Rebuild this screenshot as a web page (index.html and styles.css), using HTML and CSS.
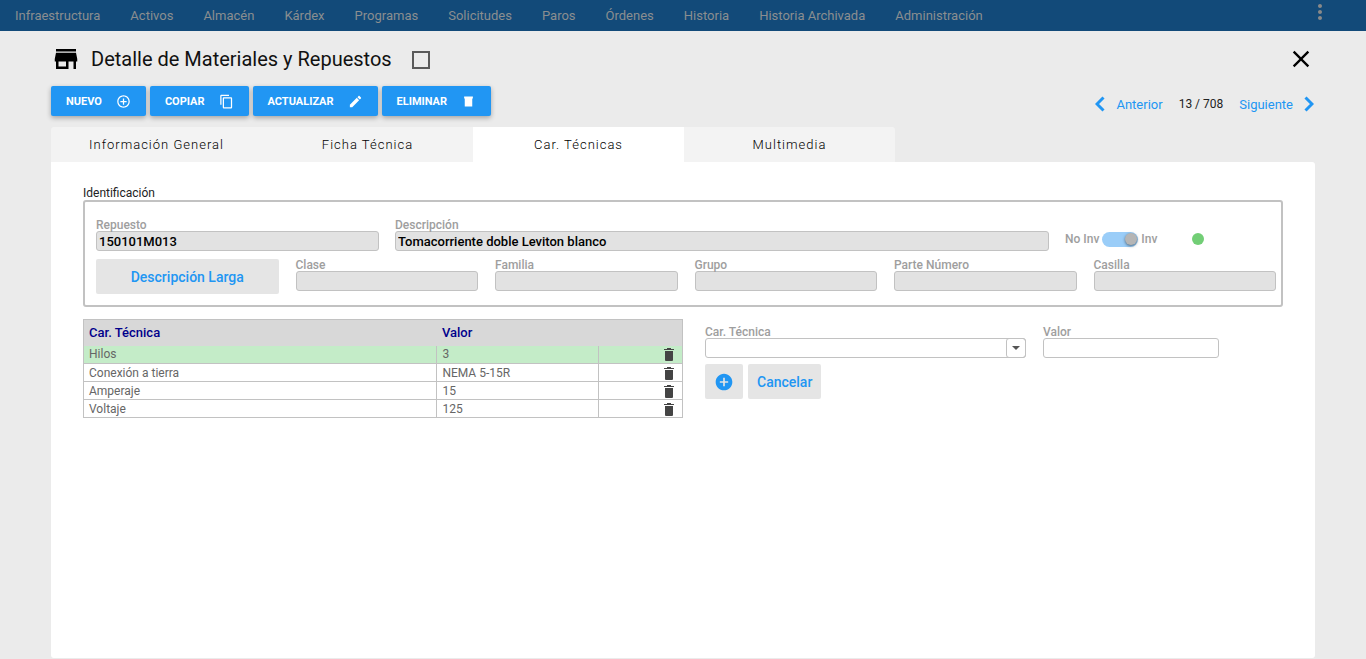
FILE: index.html
```html
<!DOCTYPE html>
<html lang="es">
<head>
  <meta charset="UTF-8">
  <meta name="viewport" content="width=device-width, initial-scale=1.0">
  <title>Detalle de Materiales y Repuestos</title>
  <link rel="stylesheet" href="styles.css">
</head>
<body>
  <nav class="navbar">
    <a href="#">Infraestructura</a>
    <a href="#">Activos</a>
    <a href="#">Almacén</a>
    <a href="#">Kárdex</a>
    <a href="#">Programas</a>
    <a href="#">Solicitudes</a>
    <a href="#">Paros</a>
    <a href="#">Órdenes</a>
    <a href="#">Historia</a>
    <a href="#">Historia Archivada</a>
    <a href="#">Administración</a>
    <button class="menu-btn" type="button" aria-label="Menú">
      <svg viewBox="0 0 24 24"><path d="M12 8c1.1 0 2-.9 2-2s-.9-2-2-2-2 .9-2 2 .9 2 2 2zm0 2c-1.1 0-2 .9-2 2s.9 2 2 2 2-.9 2-2-.9-2-2-2zm0 6c-1.1 0-2 .9-2 2s.9 2 2 2 2-.9 2-2-.9-2-2-2z"/></svg>
    </button>
  </nav>

  <main class="page">
    <header class="title-row">
      <svg class="title-icon" viewBox="0 0 24 24"><path d="M20 4H4v2h16V4zm1 10v-2l-1-5H4l-1 5v2h1v6h10v-6h4v6h2v-6h1zm-9 4H6v-4h6v4z"/></svg>
      <h1>Detalle de Materiales y Repuestos</h1>
      <input class="check" type="checkbox" aria-label="Seleccionar">
      <button class="close-btn" type="button" aria-label="Cerrar">
        <svg viewBox="0 0 24 24"><path d="M19 6.4L17.6 5 12 10.6 6.4 5 5 6.4 10.6 12 5 17.6 6.4 19 12 13.4 17.6 19 19 17.6 13.4 12z"/></svg>
      </button>
    </header>

    <div class="toolbar">
      <div class="actions">
        <button class="btn" type="button">Nuevo
          <svg viewBox="0 0 24 24"><path d="M13 7h-2v4H7v2h4v4h2v-4h4v-2h-4V7zm-1-5C6.48 2 2 6.48 2 12s4.48 10 10 10 10-4.48 10-10S17.52 2 12 2zm0 18c-4.41 0-8-3.59-8-8s3.59-8 8-8 8 3.59 8 8-3.59 8-8 8z"/></svg>
        </button>
        <button class="btn" type="button">Copiar
          <svg viewBox="0 0 24 24"><path d="M16 1H4c-1.1 0-2 .9-2 2v14h2V3h12V1zm3 4H8c-1.1 0-2 .9-2 2v14c0 1.1.9 2 2 2h11c1.1 0 2-.9 2-2V7c0-1.1-.9-2-2-2zm0 16H8V7h11v14z"/></svg>
        </button>
        <button class="btn" type="button">Actualizar
          <svg viewBox="0 0 24 24"><path d="M3 17.25V21h3.75L17.81 9.94l-3.75-3.75L3 17.25zM20.71 7.04c.39-.39.39-1.02 0-1.41l-2.34-2.34c-.39-.39-1.02-.39-1.41 0l-1.83 1.83 3.75 3.75 1.83-1.83z"/></svg>
        </button>
        <button class="btn" type="button">Eliminar
          <svg viewBox="0 0 24 24"><path d="M5 4h14v3h-1v13H6V7H5z"/></svg>
        </button>
      </div>
      <div class="pager">
        <a href="#">
          <svg viewBox="0 0 10 16"><path d="M8.5 1.5L2 8l6.500 6.500"/></svg>
          Anterior
        </a>
        <span class="pager-count">13 / 708</span>
        <a href="#">
          Siguiente
          <svg viewBox="0 0 10 16"><path d="M1.500 1.500L8 8l-6.500 6.500"/></svg>
        </a>
      </div>
    </div>

    <div class="tabs" role="tablist">
      <button class="tab" type="button" role="tab">Información General</button>
      <button class="tab" type="button" role="tab">Ficha Técnica</button>
      <button class="tab active" type="button" role="tab" aria-selected="true">Car. Técnicas</button>
      <button class="tab" type="button" role="tab">Multimedia</button>
    </div>

    <section class="panel">
      <fieldset class="group">
        <legend>Identificación</legend>
        <div class="group-box">
          <div class="row-main">
            <div class="field">
              <label for="repuesto">Repuesto</label>
              <input id="repuesto" type="text" value="150101M013" readonly>
            </div>
            <div class="field">
              <label for="descripcion">Descripción</label>
              <input id="descripcion" type="text" value="Tomacorriente doble Leviton blanco" readonly>
            </div>
            <div class="status">
              <label class="switch">
                No Inv
                <input type="checkbox" checked disabled>
                Inv
              </label>
              <span class="dot"></span>
            </div>
          </div>
          <div class="row-detail">
            <button class="btn-flat" type="button">Descripción Larga</button>
            <div class="field">
              <label for="clase">Clase</label>
              <input id="clase" type="text" readonly>
            </div>
            <div class="field">
              <label for="familia">Familia</label>
              <input id="familia" type="text" readonly>
            </div>
            <div class="field">
              <label for="grupo">Grupo</label>
              <input id="grupo" type="text" readonly>
            </div>
            <div class="field">
              <label for="parte">Parte Número</label>
              <input id="parte" type="text" readonly>
            </div>
            <div class="field">
              <label for="casilla">Casilla</label>
              <input id="casilla" type="text" readonly>
            </div>
          </div>
        </div>
      </fieldset>

      <div class="columns">
        <table class="specs">
          <thead>
            <tr>
              <th class="col-name">Car. Técnica</th>
              <th class="col-value">Valor</th>
              <th class="col-action"></th>
            </tr>
          </thead>
          <tbody>
            <tr class="selected">
              <td>Hilos</td>
              <td>3</td>
              <td><button class="trash" type="button" aria-label="Eliminar Hilos"><svg viewBox="0 0 10 13"><path d="M0 1h3V0h4v1h3v1H0zM1 3h8v9q0 1-1 1H2q-1 0-1-1z"/></svg></button></td>
            </tr>
            <tr>
              <td>Conexión a tierra</td>
              <td>NEMA 5-15R</td>
              <td><button class="trash" type="button" aria-label="Eliminar Conexión a tierra"><svg viewBox="0 0 10 13"><path d="M0 1h3V0h4v1h3v1H0zM1 3h8v9q0 1-1 1H2q-1 0-1-1z"/></svg></button></td>
            </tr>
            <tr>
              <td>Amperaje</td>
              <td>15</td>
              <td><button class="trash" type="button" aria-label="Eliminar Amperaje"><svg viewBox="0 0 10 13"><path d="M0 1h3V0h4v1h3v1H0zM1 3h8v9q0 1-1 1H2q-1 0-1-1z"/></svg></button></td>
            </tr>
            <tr>
              <td>Voltaje</td>
              <td>125</td>
              <td><button class="trash" type="button" aria-label="Eliminar Voltaje"><svg viewBox="0 0 10 13"><path d="M0 1h3V0h4v1h3v1H0zM1 3h8v9q0 1-1 1H2q-1 0-1-1z"/></svg></button></td>
            </tr>
          </tbody>
        </table>

        <form class="spec-form">
          <div class="spec-fields">
            <div class="field">
              <label for="car">Car. Técnica</label>
              <div class="combo">
                <select id="car"><option></option></select>
                <span class="combo-arrow"></span>
              </div>
            </div>
            <div class="field">
              <label for="valor">Valor</label>
              <input id="valor" type="text">
            </div>
          </div>
          <div class="spec-buttons">
            <button class="btn-flat btn-add" type="button" aria-label="Agregar">
              <svg viewBox="0 0 24 24"><path d="M12 2C6.48 2 2 6.48 2 12s4.480 10 10 10 10-4.480 10-10S17.520 2 12 2zm5 11h-4v4h-2v-4H7v-2h4V7h2v4h4v2z"/></svg>
            </button>
            <button class="btn-flat btn-cancel" type="button">Cancelar</button>
          </div>
        </form>
      </div>
    </section>
  </main>
</body>
</html>
```
FILE: styles.css
```css
/* General Styles */
* {
  box-sizing: border-box;
}

body {
  margin: 0;
  min-height: 100vh;
  display: flex;
  flex-direction: column;
  font-family: Roboto, 'Liberation Sans', sans-serif;
  font-size: 12px;
  background: #ebebeb;
  color: #222;
}

button,
input,
select {
  font-family: inherit;
}

button {
  border: none;
  padding: 0;
  background: none;
  cursor: pointer;
}

a {
  text-decoration: none;
}

svg {
  display: block;
  fill: currentColor;
}

/* Navbar */
.navbar {
  display: flex;
  height: 31px;
  padding-right: 34px;
  background: #124a79;
}

.navbar a {
  padding: 0 15px;
  font-size: 13px;
  line-height: 31px;
  color: #8a8e90;
}

.menu-btn {
  align-self: flex-start;
  margin-left: auto;
  color: #898989;
}

.menu-btn svg {
  width: 24px;
  height: 24px;
}

/* Title */
.page {
  flex: 1;
  display: flex;
  flex-direction: column;
  padding: 12px 51px 1px;
}

.title-row {
  display: flex;
  align-items: center;
  height: 32px;
  color: #111;
}

.title-icon {
  width: 30px;
  height: 30px;
  margin-right: 10px;
  color: #000;
}

h1 {
  margin: 0;
  font-size: 20px;
  font-weight: 400;
}

.check {
  appearance: none;
  width: 18px;
  height: 18px;
  margin: 2px 0 0 20px;
  border: 2px solid #5a5a5a;
}

.close-btn {
  margin-left: auto;
}

.close-btn svg {
  width: 28px;
  height: 28px;
}

/* Toolbar */
.toolbar {
  display: flex;
  justify-content: space-between;
  align-items: flex-end;
  margin-top: 11px;
}

.actions {
  display: flex;
  gap: 4px;
}

.btn {
  display: flex;
  align-items: center;
  gap: 14px;
  height: 30px;
  padding: 0 15px;
  border-radius: 2px;
  background: #2196f3;
  box-shadow: 0 2px 5px rgba(0, 0, 0, 0.3);
  color: #fff;
  font-size: 11px;
  font-weight: 700;
  text-transform: uppercase;
}

.btn svg {
  width: 15px;
  height: 15px;
}

.pager {
  display: flex;
  align-items: center;
  gap: 16px;
  height: 24px;
  padding-right: 1px;
}

.pager a {
  display: flex;
  align-items: center;
  gap: 11px;
  color: #2196f3;
  font-size: 13px;
}

.pager svg {
  width: 10px;
  height: 16px;
  fill: none;
  stroke: currentColor;
  stroke-width: 3;
}

/* Tabs */
.tabs {
  display: flex;
  margin-top: 11px;
}

.tab {
  flex: 0 1 211px;
  height: 35px;
  background: #f3f3f3;
  color: #000;
  font-size: 13px;
  font-weight: 300;
  letter-spacing: 1px;
}

.tab:first-child {
  border-top-left-radius: 3px;
}

.tab:last-child {
  border-top-right-radius: 3px;
}

.tab.active {
  background: #fff;
}

/* Panel */
.panel {
  flex: 1;
  padding: 24px 32px;
  border-radius: 0 3px 3px 3px;
  background: #fff;
}

.group {
  margin: 0;
  padding: 0;
  border: none;
}

.group legend {
  padding: 0;
  line-height: 14px;
}

.group-box {
  padding: 17px 5px 11px 11px;
  border: 2px solid #c2c2c2;
  border-radius: 3px;
}

.row-main {
  display: grid;
  grid-template-columns: 283fr 654fr 211fr;
  gap: 16px;
}

.row-detail {
  display: grid;
  grid-template-columns: repeat(6, 1fr);
  align-items: end;
  gap: 17px;
  margin-top: 8px;
}

.field label {
  display: block;
  line-height: 12px;
  font-weight: 500;
  color: #9e9e9e;
}

.field input,
.field select {
  display: block;
  width: 100%;
  height: 20px;
  padding: 0 2px;
  border: 1px solid #c2c2c2;
  border-radius: 3px;
  background: #fff;
  color: #000;
  font-size: 13px;
  font-weight: 500;
}

.row-detail .field {
  align-self: start;
}

.field input[readonly] {
  background: #e2e2e2;
}

.status {
  align-self: end;
  display: flex;
  align-items: center;
  gap: 35px;
  height: 24px;
}

.switch {
  display: flex;
  align-items: center;
  gap: 3px;
  font-weight: 500;
  color: #9e9e9e;
}

.switch input {
  appearance: none;
  display: flex;
  justify-content: flex-end;
  align-items: center;
  width: 36px;
  height: 15px;
  margin: 0;
  padding: 0 1px;
  border-radius: 8px;
  background: #9acdf8;
}

.switch input::after {
  content: '';
  width: 12px;
  height: 12px;
  border-radius: 50%;
  background: #b5b5b5;
  box-shadow: 0 1px 3px rgba(0, 0, 0, 0.5);
}

.dot {
  width: 12px;
  height: 12px;
  border-radius: 50%;
  background: #72ce76;
}

.btn-flat {
  height: 35px;
  border-radius: 2px;
  background: #e5e5e5;
  color: #2196f3;
  font-size: 14px;
  font-weight: 500;
}

/* Table and form */
.columns {
  display: flex;
  align-items: flex-start;
  gap: 22px;
  margin-top: 12px;
}

.specs {
  flex: none;
  width: 50%;
  border-collapse: collapse;
  table-layout: fixed;
  border: 1px solid #c2c2c2;
}

.specs th {
  height: 26px;
  padding: 0 5px;
  background: #d8d8d8;
  color: #00008b;
  font-size: 13px;
  font-weight: 500;
  text-align: left;
}

.col-name {
  width: 59%;
}

.col-value {
  width: 27%;
}

.col-action {
  width: 14%;
}

.specs td {
  height: 18px;
  padding: 0 5px;
  border: 1px solid #c2c2c2;
  color: #666;
  line-height: 16px;
}

.specs .selected td {
  border-top: none;
  background: #c4ecc8;
}

.trash {
  display: block;
  margin-left: auto;
  padding: 2px 3px 1px;
  color: #444;
}

.trash svg {
  width: 10px;
  height: 13px;
}

.spec-form {
  flex: 1;
  padding-top: 7px;
}

.spec-fields {
  display: grid;
  grid-template-columns: 321fr 176fr 47fr;
  gap: 17px;
}

.combo {
  position: relative;
}

.combo select {
  appearance: none;
}

.combo-arrow {
  position: absolute;
  top: 0;
  right: 0;
  width: 20px;
  height: 20px;
  border: 1px solid #c2c2c2;
  border-radius: 3px;
  pointer-events: none;
}

.combo-arrow::after {
  content: '';
  position: absolute;
  top: 7px;
  left: 5px;
  border: 4px solid transparent;
  border-top-color: #555;
}

.spec-buttons {
  display: flex;
  gap: 5px;
  margin-top: 6px;
}

.btn-add {
  padding: 0 9px;
}

.btn-add svg {
  width: 20px;
  height: 20px;
}

.btn-cancel {
  padding: 0 9px;
}
```
